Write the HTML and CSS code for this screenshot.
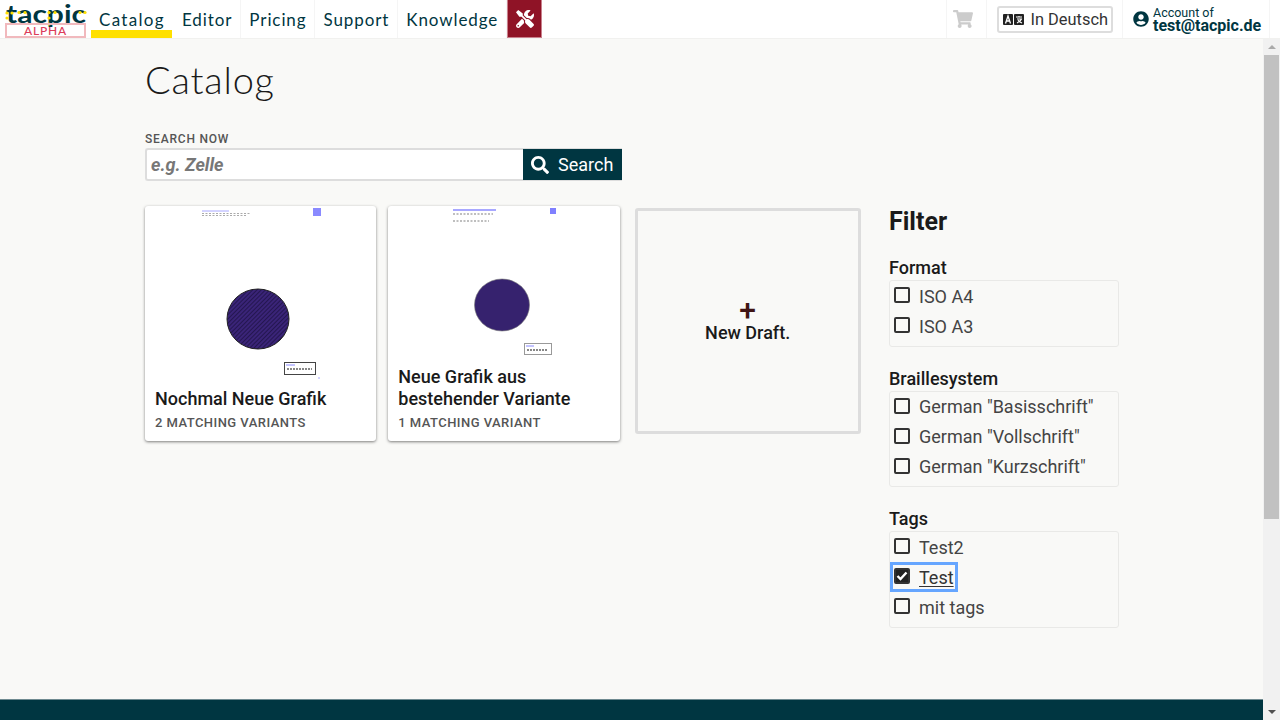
FILE: index.html
```html
<!DOCTYPE html>
<html lang="en">
<head>
<meta charset="utf-8">
<title>Catalog</title>
<link rel="stylesheet" href="styles.css">
</head>
<body>
<header class="topbar">
  <a class="logo">
    <svg class="logo-word" width="82" height="24" viewBox="0 0 82 24">
      <text x="1" y="22.500" class="logo-text" textLength="80" lengthAdjust="spacingAndGlyphs">tacpic</text>
      <g class="logo-dots">
        <circle cx="2" cy="13" r="1.600"/><circle cx="2" cy="18" r="1.600"/><circle cx="7" cy="13" r="1.600"/>
        <circle cx="14" cy="12.500" r="1.600"/><circle cx="20" cy="12.500" r="1.600"/>
        <circle cx="44" cy="12.500" r="1.600"/><circle cx="44" cy="18" r="1.600"/><circle cx="44" cy="24" r="1.600"/><circle cx="50" cy="12.500" r="1.600"/>
        <circle cx="75" cy="12.500" r="1.600"/><circle cx="80" cy="12.500" r="1.600"/>
      </g>
    </svg>
    <span class="logo-alpha">ALPHA</span>
  </a>
  <nav class="nav">
    <a class="nav-item active">Catalog</a>
    <a class="nav-item">Editor</a>
    <a class="nav-item">Pricing</a>
    <a class="nav-item">Support</a>
    <a class="nav-item">Knowledge</a>
    <a class="nav-tools">
      <svg width="18" height="18" viewBox="0 0 512 512"><path fill="#fff" d="M501.1 395.7 384 278.6c-23.100-23.100-57.600-27.600-85.400-13.900L192 158.100V96L64 0 0 64l96 128h62.100l106.600 106.600c-13.600 27.800-9.200 62.300 13.900 85.400l117.100 117.100c14.600 14.600 38.200 14.600 52.700 0l52.700-52.700c14.500-14.600 14.500-38.200 0-52.700zM331.700 225c28.300 0 54.900 11 74.900 31l19.400 19.400c15.800-6.900 30.800-16.500 43.800-29.500 37.100-37.100 49.700-89.300 37.900-136.700-2.200-9-13.500-12.100-20.100-5.500l-74.400 74.400-67.900-11.300L334 98.900l74.400-74.400c6.600-6.600 3.400-17.900-5.700-20.200-47.400-11.700-99.600.9-136.600 37.900-28.500 28.500-41.900 66.100-41.200 103.600l82.100 82.100c8.100-1.900 16.500-2.900 24.700-2.900zm-103.900 82-56.700-56.700L18.700 402.800c-25 25-25 65.500 0 90.500s65.500 25 90.500 0l123.600-123.600c-7.600-19.900-9.900-41.600-5-62.700zM64 472c-13.200 0-24-10.800-24-24 0-13.300 10.700-24 24-24s24 10.700 24 24c0 13.200-10.700 24-24 24z"/></svg>
    </a>
  </nav>
  <div class="top-right">
    <a class="cart">
      <svg width="20" height="18" viewBox="0 0 576 512"><path fill="#ccc" d="M528.120 301.319l47.273-208C578.806 78.301 567.391 64 551.990 64H159.208l-9.166-44.810C147.758 8.021 137.930 0 126.529 0H24C10.745 0 0 10.745 0 24v16c0 13.255 10.745 24 24 24h69.883l70.248 343.435C147.325 417.100 136 435.222 136 456c0 30.928 25.072 56 56 56s56-25.072 56-56c0-15.674-6.447-29.835-16.824-40h209.647C430.447 426.165 424 440.326 424 456c0 30.928 25.072 56 56 56s56-25.072 56-56c0-22.172-12.888-41.332-31.579-50.405l5.517-24.276c3.413-15.018-8.002-29.319-23.403-29.319H218.117l-6.545-32h293.145c11.206 0 20.920-7.754 23.403-18.681z"/></svg>
    </a>
    <div class="lang-wrap">
      <a class="lang">
        <svg width="21" height="11" viewBox="0 0 21 11"><rect width="10" height="11" rx="1" fill="#222"/><rect x="11" width="10" height="11" rx="1" fill="#222"/><path d="M2.500 9.500 5 2l2.500 7.500M3.500 7h3" stroke="#fff" stroke-width="1.300" fill="none"/><path d="M13 3h6M16 2v1M14 5h4.500c-.5 2-2.500 3-4.500 4M15 6c.7 1.400 2.200 2.400 4 3" stroke="#fff" stroke-width="1.100" fill="none"/></svg>
        <span>In Deutsch</span>
      </a>
    </div>
    <a class="account">
      <svg width="16" height="16" viewBox="0 0 496 512"><path fill="#003641" d="M248 8C111 8 0 119 0 256s111 248 248 248 248-111 248-248S385 8 248 8zm0 96c48.600 0 88 39.400 88 88s-39.400 88-88 88-88-39.400-88-88 39.400-88 88-88zm0 344c-58.700 0-111.300-26.600-146.500-68.200 18.800-35.400 55.600-59.800 98.500-59.800 2.400 0 4.800.4 7.100 1.100 13 4.200 26.600 6.900 40.900 6.900 14.300 0 28-2.700 40.900-6.900 2.300-.7 4.700-1.100 7.100-1.100 42.900 0 79.700 24.400 98.500 59.800C359.300 421.400 306.700 448 248 448z"/></svg>
      <span class="account-text"><span class="account-small">Account of</span><strong class="account-mail">test@tacpic.de</strong></span>
    </a>
  </div>
</header>
<div class="viewport">
  <div class="page">
    <main class="content">
      <h1 class="title">Catalog</h1>
      <section class="search">
        <label class="search-label">SEARCH NOW</label>
        <div class="search-row">
          <input class="search-input" placeholder="e.g. Zelle">
          <button class="search-btn">
            <svg width="18" height="18" viewBox="0 0 512 512"><path fill="#fff" d="M505 442.700 405.300 343c-4.500-4.500-10.600-7-17-7H372c27.600-35.300 44-79.700 44-128C416 93.100 322.900 0 208 0S0 93.100 0 208s93.100 208 208 208c48.300 0 92.700-16.400 128-44v16.300c0 6.400 2.500 12.500 7 17l99.700 99.700c9.400 9.400 24.600 9.400 33.900 0l28.300-28.300c9.400-9.400 9.400-24.600.1-34zM208 336c-70.700 0-128-57.200-128-128 0-70.700 57.200-128 128-128 70.700 0 128 57.200 128 128 0 70.700-57.200 128-128 128z"/></svg>
            <span>Search</span>
          </button>
        </div>
      </section>
      <div class="columns">
        <div class="cards">
          <article class="card">
            <div class="thumb">
              <svg width="231" height="174" viewBox="0 0 231 174">
                <defs>
                  <pattern id="hatch" width="3" height="3" patternUnits="userSpaceOnUse" patternTransform="rotate(45)">
                    <rect width="3" height="3" fill="#3a2478"/>
                    <rect width="1" height="3" fill="#241650"/>
                  </pattern>
                </defs>
                <path d="M57 5h27" stroke="#a8a8ff" stroke-width="1"/>
                <path d="M57 7.500h48M57 9.500h45" stroke="#aaa" stroke-width="1" stroke-dasharray="2 1.500"/>
                <rect x="168" y="2" width="8" height="8" fill="#8a8aff"/>
                <ellipse cx="113" cy="113" rx="31" ry="30" fill="url(#hatch)" stroke="#222" stroke-width="1"/>
                <rect x="139.500" y="156.500" width="31" height="12" fill="#fff" stroke="#444" stroke-width="1"/>
                <path d="M141 159h9" stroke="#88f" stroke-width="1"/>
                <path d="M142 163h25" stroke="#888" stroke-width="2" stroke-dasharray="2 1"/>
                <path d="M173 172h2" stroke="#aaf" stroke-width="1"/>
              </svg>
            </div>
            <div class="card-body">
              <h2 class="card-title">Nochmal Neue Grafik</h2>
              <p class="card-meta">2 MATCHING VARIANTS</p>
            </div>
          </article>
          <article class="card">
            <div class="thumb">
              <svg width="231" height="152" viewBox="0 0 231 152">
                <path d="M65 4h43" stroke="#a8a8ff" stroke-width="2"/>
                <path d="M65 8h40M65 15h36" stroke="#aaa" stroke-width="1.500" stroke-dasharray="2 1.500"/>
                <rect x="162" y="2" width="6" height="6" fill="#8080ff"/>
                <ellipse cx="114" cy="99" rx="27.500" ry="26" fill="#36226e" stroke="#777" stroke-width=".6"/>
                <rect x="136.500" y="137.500" width="27" height="11" fill="#fff" stroke="#999" stroke-width="1"/>
                <path d="M138 140h8" stroke="#88f" stroke-width="1"/>
                <path d="M139 144h20" stroke="#888" stroke-width="2" stroke-dasharray="2 1"/>
              </svg>
            </div>
            <div class="card-body">
              <h2 class="card-title">Neue Grafik aus bestehender Variante</h2>
              <p class="card-meta">1 MATCHING VARIANT</p>
            </div>
          </article>
          <a class="new-draft">
            <span class="plus">+</span>
            <span class="new-label">New Draft.</span>
          </a>
        </div>
        <aside class="filter">
          <h2 class="filter-title">Filter</h2>
          <fieldset class="group">
            <legend class="group-title">Format</legend>
            <div class="box">
              <label class="opt"><span class="check"></span>ISO A4</label>
              <label class="opt"><span class="check"></span>ISO A3</label>
            </div>
          </fieldset>
          <fieldset class="group">
            <legend class="group-title">Braillesystem</legend>
            <div class="box">
              <label class="opt"><span class="check"></span>German "Basisschrift"</label>
              <label class="opt"><span class="check"></span>German "Vollschrift"</label>
              <label class="opt"><span class="check"></span>German "Kurzschrift"</label>
            </div>
          </fieldset>
          <fieldset class="group">
            <legend class="group-title">Tags</legend>
            <div class="box">
              <label class="opt"><span class="check"></span>Test2</label>
              <label class="opt opt-focus"><span class="check checked"><svg width="12" height="10" viewBox="0 0 12 10"><path d="M1.500 5l3 3 6-6.500" stroke="#fff" stroke-width="2.400" fill="none"/></svg></span><span class="under">Test</span></label>
              <label class="opt"><span class="check"></span>mit tags</label>
            </div>
          </fieldset>
        </aside>
      </div>
    </main>
    <footer class="footer"></footer>
  </div>
  <div class="scrollbar">
    <span class="arrow up"></span>
    <span class="thumb-bar"></span>
    <span class="track"></span>
    <span class="arrow down"></span>
  </div>
</div>
</body>
</html>
```
FILE: styles.css
```css
* { box-sizing: border-box; }
html, body { margin: 0; height: 720px; overflow: hidden; }
body { display: flex; flex-direction: column; background: #f9f9f7; font-family: Roboto, sans-serif; color: #1a1a1a; }
.topbar { display: flex; height: 39px; flex: none; background: #fff; border-bottom: 1px solid #f1f1ef; }
.logo { width: 91px; flex: none; padding: 0 0 0 5px; display: flex; flex-direction: column; }
.logo-word { display: block; margin-bottom: -1px; overflow: visible; }
.logo-text { font-family: Lato, sans-serif; font-size: 25px; font-weight: 700; fill: #003641; }
.logo-dots { fill: #ffe000; }
.logo-alpha { width: 81px; height: 15px; border: 2px solid #f1b9bd; color: #dc3c5a; font-family: Lato, sans-serif; font-size: 12px; font-weight: 500; letter-spacing: .8px; text-align: center; line-height: 12px; }
.nav { display: flex; height: 38px; }
.nav-item { font-family: Lato, sans-serif; font-size: 17px; letter-spacing: .9px; color: #003641; padding: 0 8px; line-height: 39px; border-right: 1px solid #f5f5f5; white-space: nowrap; }
.nav-item.active { width: 81px; letter-spacing: 1.300px; border-right: 0; border-bottom: 8px solid #ffe000; height: 38px; margin-right: 2px; }
.nav-tools { width: 35px; background: #8f1326; display: flex; align-items: center; justify-content: center; border: 1px solid #c9808c; border-width: 0 1px 1px; }
.top-right { margin-left: auto; margin-right: 10px; display: flex; height: 38px; }
.cart { width: 41px; display: flex; align-items: center; justify-content: center; padding-right: 7px; border: solid #f5f5f5; border-width: 0 1px; }
.lang-wrap { width: 136px; display: flex; align-items: center; justify-content: center; border-right: 1px solid #f5f5f5; }
.lang { width: 116px; height: 27px; border: 2px solid #ddd; border-radius: 3px; display: flex; align-items: center; gap: 7px; padding-left: 4px; font-size: 16.400px; color: #333; white-space: nowrap; }
.account { width: 147px; display: flex; align-items: center; gap: 4px; padding-left: 10px; color: #003641; border-right: 1px solid #f5f5f5; }
.account-text { display: flex; flex-direction: column; }
.account-small { font-size: 12.500px; line-height: 13px; }
.account-mail { font-size: 16px; line-height: 14px; font-weight: 700; }
.viewport { flex: 1; display: flex; min-height: 0; }
.page { flex: 1; display: flex; flex-direction: column; min-width: 0; }
.content { flex: 1; padding: 0 145px; }
.title { margin: 17px 0 0; font-family: Lato, sans-serif; font-weight: 300; font-size: 38px; letter-spacing: .8px; line-height: 46px; color: #1a1a1a; }
.search { margin-top: 29px; width: 477px; }
.search-label { display: block; font-size: 12px; font-weight: 500; letter-spacing: .8px; color: #555; line-height: 16px; }
.search-row { display: flex; height: 33px; margin-top: 1px; }
.search-input { flex: 1; min-width: 0; border: 2px solid #ddd; border-right: 0; border-radius: 3px 0 0 3px; background: #fff; padding: 0 4px; font: italic 700 18px Roboto, sans-serif; outline: 0; }
.search-input::placeholder { color: #777; opacity: 1; }
.search-btn { width: 99px; border: solid #ddd; border-width: 1px 0; background: #003641; color: #fff; font: 18px Roboto, sans-serif; display: flex; align-items: center; gap: 9px; padding: 0 0 0 8px; }
.columns { display: flex; margin-top: 25px; }
.cards { display: flex; align-items: flex-start; width: 716px; flex: none; }
.card { width: 231.330px; height: 235px; margin-right: 12px; background: #fff; border-radius: 3px; box-shadow: 0 1px 3px rgba(0,0,0,.5); display: flex; flex-direction: column; overflow: hidden; flex: none; }
.thumb { flex: 1; min-height: 0; }
.thumb svg { display: block; }
.card-body { padding: 0 10px 10px; }
.card-title { margin: 0; font-size: 18px; line-height: 22px; font-weight: 500; color: #1a1a1a; }
.card-meta { margin: 5px 0 0; font-size: 13px; font-weight: 500; letter-spacing: .45px; color: #555; line-height: 16px; }
.new-draft { width: 226px; height: 226px; flex: none; margin: 2px 0 0 3px; border: 3px solid #ddd; border-radius: 3px; display: flex; flex-direction: column; align-items: center; justify-content: center; }
.plus { font-size: 30px; font-weight: 500; line-height: 24px; color: #401414; }
.new-label { font-size: 18px; font-weight: 500; line-height: 22px; }
.filter { margin-left: 28px; width: 230px; flex: none; }
.filter-title { margin: 2px 0 0; font-size: 25px; font-weight: 700; line-height: 28px; }
.group { margin: 0 0 21px; padding: 0; border: 0; }
.group-title { padding: 0; margin-bottom: 2px; font-size: 18px; font-weight: 500; line-height: 21px; }
.filter-title + .group { margin-top: 21px; }
.box { width: 230px; border: 1px solid #e9e9e7; border-radius: 3px; padding: 0 0 4.600px; }
.opt { display: flex; width: max-content; align-items: center; gap: 9px; height: 30px; padding: 0 4px 0 4px; font-size: 18px; color: #444; }
.check { width: 16px; height: 16px; border: 2px solid #333; border-radius: 2px; display: flex; align-items: center; justify-content: center; flex: none; margin-top: -2px; }
.check.checked { background: #222; }
.opt-focus { outline: 3px solid #66a6ff; outline-offset: -3px; color: #333; }
.under { text-decoration: underline; text-underline-offset: 2px; }
.footer { height: 21px; flex: none; background: #003641; border-top: 1px solid #6f8a90; }
.scrollbar { width: 17px; flex: none; background: #f1f1f1; display: flex; flex-direction: column; }
.thumb-bar { height: 464px; width: 15px; margin: 0 1px; background: #c1c1c1; flex: none; }
.track { flex: 1; }
.arrow { height: 16px; flex: none; display: flex; align-items: center; justify-content: center; }
.arrow::before { content: ""; border: 4px solid transparent; }
.arrow.up::before { border-bottom: 4px solid #aaa; border-top: 0; }
.arrow.down::before { border-top: 4px solid #505050; border-bottom: 0; }
```
